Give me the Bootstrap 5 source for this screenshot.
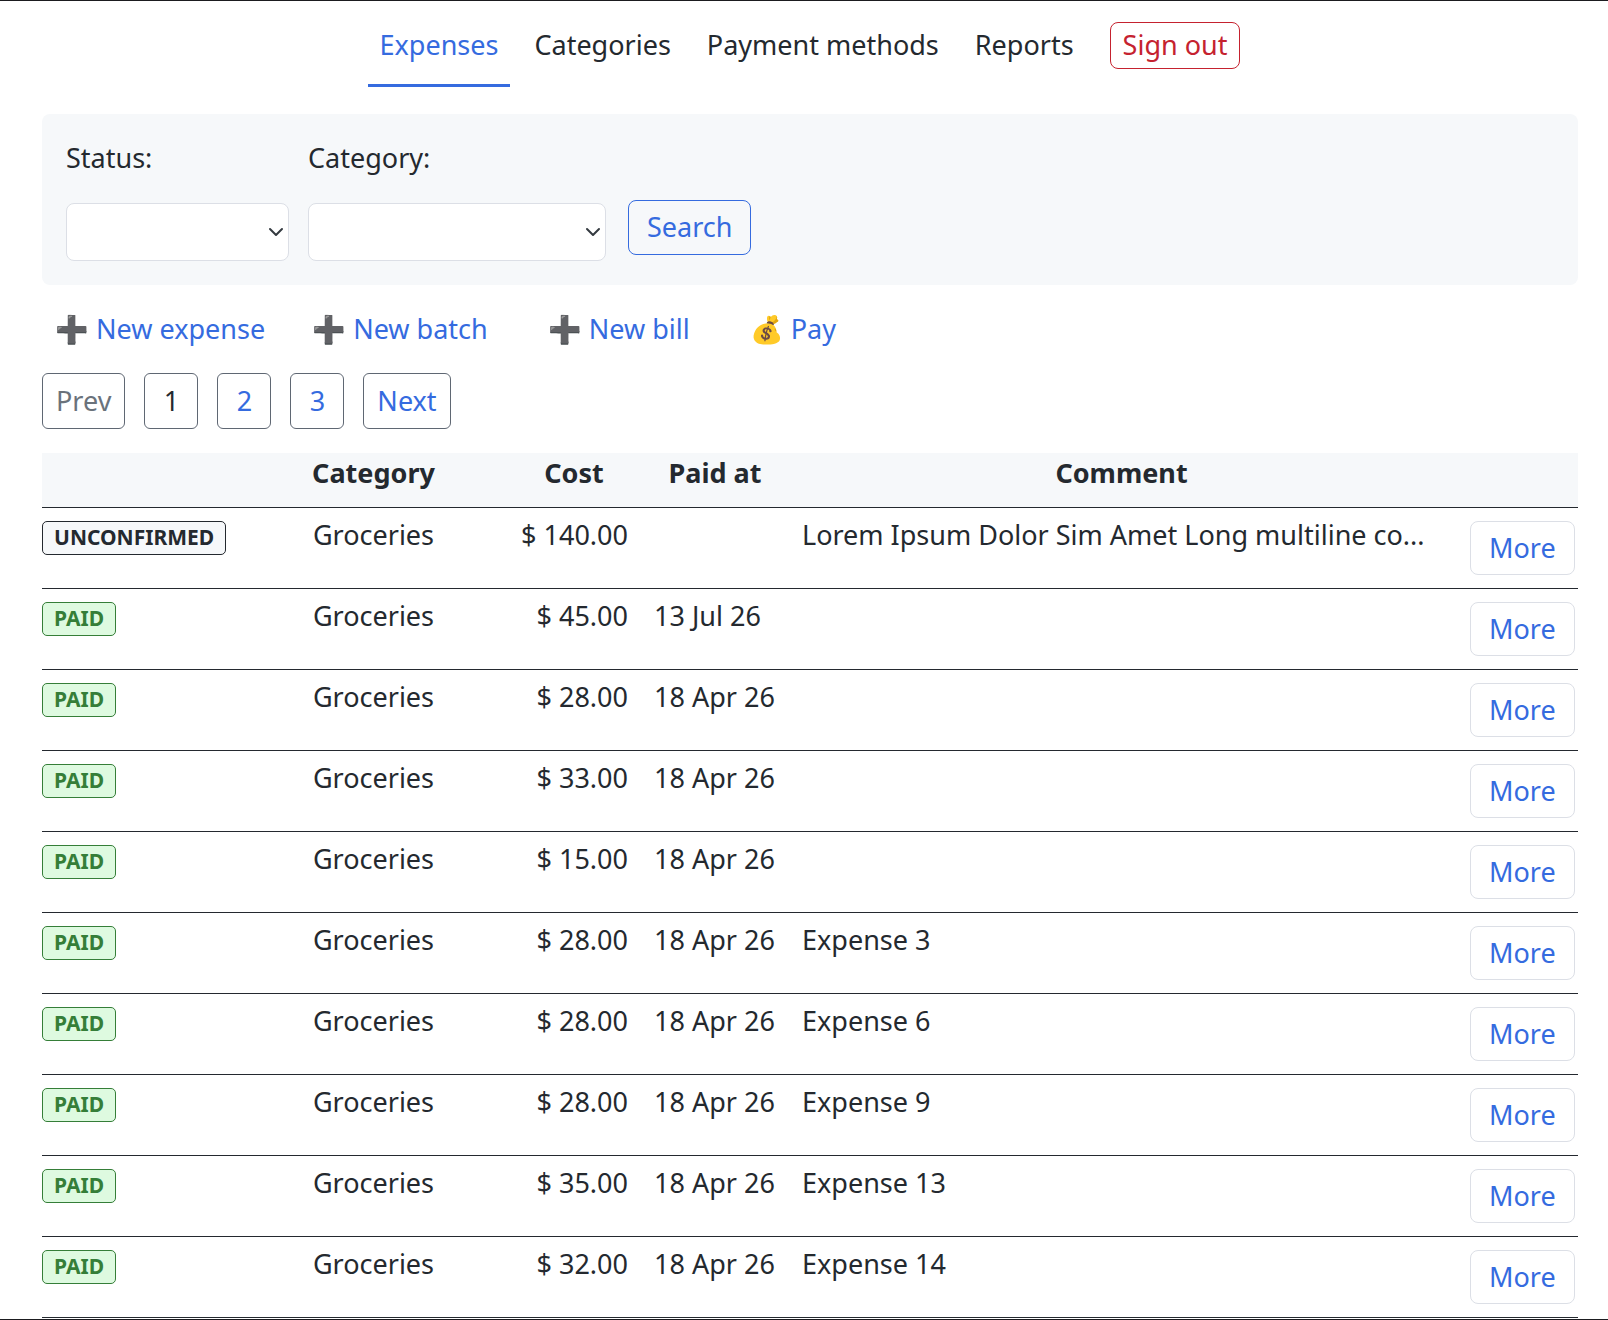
<!DOCTYPE html>
<html lang="en">
<head>
<meta charset="utf-8">
<meta name="viewport" content="width=device-width, initial-scale=1">
<title>Expenses</title>
<link href="https://cdn.jsdelivr.net/npm/bootstrap@5.3.0/dist/css/bootstrap.min.css" rel="stylesheet">
<style>
:root { --ink: #24292f; --accent: #356bdf; --soft: #f6f8fa; --line: #dcdfe6; --slate: #5f6773; --danger: #c5222f; --ok: #357e38; --ok-soft: #defae0; }
body { font-family: "Noto Sans", sans-serif; font-size: 27px; line-height: 40px; color: var(--ink); background: #fff; }
a { color: var(--accent); text-decoration: none; }
.app-shell { border-top: 1px solid #1b1b1f; border-bottom: 1px solid #1b1b1f; height: 100vh; overflow: hidden; padding: 0 30px 0 42px; }
.main-nav { gap: 12px; padding-top: 20px; margin: 0 0 27px -12px; }
.main-nav .nav-link { color: var(--ink); padding: 4px 12px 19px; border-bottom: 3px solid transparent; }
.main-nav .nav-link.active { color: var(--accent); border-color: var(--accent); }
.main-nav .btn { margin: 1px 0 0 12px; padding: 2px 12px 4px; }
.btn { --bs-btn-font-size: 27px; --bs-btn-line-height: 39px; --bs-btn-border-radius: 8px; }
.btn-leave { --bs-btn-color: var(--danger); --bs-btn-border-color: var(--danger); }
.btn-find { --bs-btn-color: var(--accent); --bs-btn-border-color: var(--accent); padding: 6px 18px 8px; margin: 0 0 6px 3px; }
.btn-more { --bs-btn-color: var(--accent); --bs-btn-border-color: var(--line); --bs-btn-line-height: 40px; padding: 6px 18px; }
.filters { background: var(--soft); border-radius: 8px; padding: 24px; gap: 19px; }
.filters label { margin-bottom: 25px; }
.filters .form-select { height: 58px; font-size: 27px; border-color: var(--line); border-radius: 8px; background-position: right 4px center; background-size: 16px 16px; }
.pick-status { width: 223px; }
.pick-category { width: 298px; }
.actions { gap: 47px; padding: 24px 13px; }
.actions a + a + a { margin-left: 13px; }
.pager { gap: 19px; margin-bottom: 24px; }
.pager .page-item .page-link { border: 1px solid var(--slate); border-radius: 6px; color: var(--accent); padding: 7px 13px; min-width: 54px; text-align: center; line-height: 40px; margin: 0; }
.pager .page-item.active .page-link { background: #fff; color: var(--ink); }
.pager .page-item.disabled .page-link { background: #fff; color: #6a727b; }
.ledger { table-layout: fixed; margin: 0; --bs-table-color: var(--ink); --bs-table-bg: transparent; color: var(--ink); }
.ledger > :not(caption) > * > * { padding: 7px 13px 0; border-bottom: 1px solid var(--ink); vertical-align: top; white-space: nowrap; }
.ledger > thead > tr > th { background: var(--soft); padding: 0 13px 14px; text-align: center; }
.ledger > tbody > tr > td:first-child { padding: 13px 0 13px; }
.ledger > tbody > tr > td:last-child { padding: 13px 0 13px 16px; }
.col-state { width: 198px; } .col-kind { width: 267px; } .col-cost { width: 134px; } .col-date { width: 148px; } .col-more { width: 124px; }
.state { display: block; width: fit-content; border: 1px solid var(--ok); background: var(--ok-soft); color: var(--ok); border-radius: 5px; font-size: 21px; font-weight: 700; line-height: 30px; padding: 0 11px 2px; text-transform: uppercase; }
.state-open { border-color: var(--ink); background: var(--soft); color: var(--ink); }
</style>
<script src="https://cdn.jsdelivr.net/npm/bootstrap@5.3.0/dist/js/bootstrap.bundle.min.js"></script>
</head>
<body>
<div class="app-shell">
  <nav class="main-nav d-flex justify-content-center align-items-start" aria-label="Main">
    <a class="nav-link active" href="#" aria-current="page">Expenses</a>
    <a class="nav-link" href="#">Categories</a>
    <a class="nav-link" href="#">Payment methods</a>
    <a class="nav-link" href="#">Reports</a>
    <button class="btn btn-leave" type="button">Sign out</button>
  </nav>
  <main>
    <form class="filters d-flex align-items-end">
      <div class="d-flex flex-column">
        <label for="status">Status:</label>
        <select class="form-select pick-status" id="status"><option></option></select>
      </div>
      <div class="d-flex flex-column">
        <label for="category">Category:</label>
        <select class="form-select pick-category" id="category"><option></option></select>
      </div>
      <button class="btn btn-find" type="button">Search</button>
    </form>
    <div class="actions d-flex">
      <a href="#">➕ New expense</a>
      <a href="#">➕ New batch</a>
      <a href="#">➕ New bill</a>
      <a href="#">💰 Pay</a>
    </div>
    <nav aria-label="Pages">
      <ul class="pager d-flex list-unstyled">
        <li class="page-item disabled"><a class="page-link" aria-disabled="true">Prev</a></li>
        <li class="page-item active"><a class="page-link" href="#" aria-current="page">1</a></li>
        <li class="page-item"><a class="page-link" href="#">2</a></li>
        <li class="page-item"><a class="page-link" href="#">3</a></li>
        <li class="page-item"><a class="page-link" href="#">Next</a></li>
      </ul>
    </nav>
    <table class="table ledger">
      <colgroup><col class="col-state"><col class="col-kind"><col class="col-cost"><col class="col-date"><col><col class="col-more"></colgroup>
      <thead><tr><th></th><th scope="col">Category</th><th scope="col">Cost</th><th scope="col">Paid at</th><th scope="col">Comment</th><th></th></tr></thead>
      <tbody>
        <tr><td><span class="state state-open">Unconfirmed</span></td><td class="text-center">Groceries</td><td class="text-end">$ 140.00</td><td></td><td>Lorem Ipsum Dolor Sim Amet Long multiline co...</td><td><button class="btn btn-more" type="button">More</button></td></tr>
        <tr><td><span class="state">Paid</span></td><td class="text-center">Groceries</td><td class="text-end">$ 45.00</td><td>13 Jul 26</td><td></td><td><button class="btn btn-more" type="button">More</button></td></tr>
        <tr><td><span class="state">Paid</span></td><td class="text-center">Groceries</td><td class="text-end">$ 28.00</td><td>18 Apr 26</td><td></td><td><button class="btn btn-more" type="button">More</button></td></tr>
        <tr><td><span class="state">Paid</span></td><td class="text-center">Groceries</td><td class="text-end">$ 33.00</td><td>18 Apr 26</td><td></td><td><button class="btn btn-more" type="button">More</button></td></tr>
        <tr><td><span class="state">Paid</span></td><td class="text-center">Groceries</td><td class="text-end">$ 15.00</td><td>18 Apr 26</td><td></td><td><button class="btn btn-more" type="button">More</button></td></tr>
        <tr><td><span class="state">Paid</span></td><td class="text-center">Groceries</td><td class="text-end">$ 28.00</td><td>18 Apr 26</td><td>Expense 3</td><td><button class="btn btn-more" type="button">More</button></td></tr>
        <tr><td><span class="state">Paid</span></td><td class="text-center">Groceries</td><td class="text-end">$ 28.00</td><td>18 Apr 26</td><td>Expense 6</td><td><button class="btn btn-more" type="button">More</button></td></tr>
        <tr><td><span class="state">Paid</span></td><td class="text-center">Groceries</td><td class="text-end">$ 28.00</td><td>18 Apr 26</td><td>Expense 9</td><td><button class="btn btn-more" type="button">More</button></td></tr>
        <tr><td><span class="state">Paid</span></td><td class="text-center">Groceries</td><td class="text-end">$ 35.00</td><td>18 Apr 26</td><td>Expense 13</td><td><button class="btn btn-more" type="button">More</button></td></tr>
        <tr><td><span class="state">Paid</span></td><td class="text-center">Groceries</td><td class="text-end">$ 32.00</td><td>18 Apr 26</td><td>Expense 14</td><td><button class="btn btn-more" type="button">More</button></td></tr>
      </tbody>
    </table>
  </main>
</div>
</body>
</html>
